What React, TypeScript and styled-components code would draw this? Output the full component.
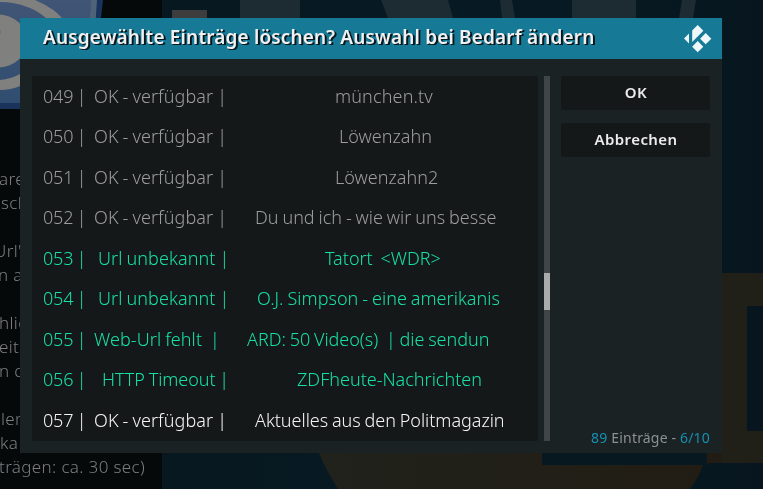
import React from "react";
import styled, { createGlobalStyle } from "styled-components";

const GlobalStyle = createGlobalStyle`
  * { box-sizing: border-box; }
  body { margin: 0; background: #07171f; overflow: hidden; }
`;

const Screen = styled.main`
  position: relative;
  width: 763px;
  height: 489px;
  padding: 18px 0 0 20px;
  overflow: hidden;
  font-family: "Noto Sans", sans-serif;
  will-change: transform;
`;

const Backdrop = styled.svg`
  position: absolute;
  inset: 0;
`;

const Description = styled.div`
  position: absolute;
  top: 167px;
  left: 0;
  width: 162px;
  color: #7c7e7f;
  font-size: 17px;
  font-weight: 300;
  line-height: 24px;
`;

const DescriptionLine = styled.div<{ $shift: number }>`
  height: 24px;
  margin-left: ${(p) => p.$shift}px;
  letter-spacing: 0.36px;
  white-space: pre;
`;

const Dialog = styled.section`
  position: relative;
  display: flex;
  flex-direction: column;
  width: 702px;
  height: 435px;
  background: #1b2224;
`;

const Header = styled.header`
  display: flex;
  align-items: center;
  justify-content: space-between;
  height: 41px;
  padding: 0 10px 0 23px;
  background: #167a96;
`;

const Title = styled.h1`
  margin: 0;
  padding-bottom: 4px;
  color: #f0f0f0;
  font-size: 19px;
  font-weight: 600;
  line-height: 24px;
  letter-spacing: 0.15px;
  white-space: nowrap;
  text-shadow: 1px 1px 0 #061820, 2px 1px 0 #061820;
`;

const Body = styled.div`
  display: flex;
  flex: 1;
  padding: 17px 12px 12px 12px;
`;

const List = styled.ul`
  width: 506px;
  height: 365px;
  margin: 0;
  padding: 0;
  background: #141819;
  border-radius: 2px;
  list-style: none;
`;

type Tone = "muted" | "warning" | "selected";

const tones: Record<Tone, string> = {
  muted: "#9c9d9d",
  warning: "#17e0a4",
  selected: "#f6f6f6",
};

const Row = styled.li<{ $tone: Tone }>`
  display: grid;
  grid-template-columns: 51px 153px 1fr;
  align-items: center;
  height: 40.55px;
  padding: 0 0 1.4px 11px;
  color: ${(p) => tones[p.$tone]};
  font-size: 18px;
  font-weight: 300;
  line-height: 24px;
  word-spacing: -0.8px;
  white-space: pre;
`;

const Cell = styled.span<{ $indent?: number; $spacing?: number }>`
  padding-left: ${(p) => p.$indent ?? 0}px;
  letter-spacing: ${(p) => p.$spacing ?? 0}px;
`;

const NumberCell = styled(Cell)`
  letter-spacing: -0.2px;
  word-spacing: -1px;
`;

const ScrollTrack = styled.div`
  width: 6px;
  height: 365px;
  margin-left: 6px;
  padding-top: 197px;
  background: #404547;
`;

const ScrollThumb = styled.div`
  height: 37px;
  background: #aaabab;
`;

const Actions = styled.aside`
  display: flex;
  flex: 1;
  flex-direction: column;
  gap: 13px;
  margin-left: 11px;
`;

const ActionButton = styled.button`
  height: 34px;
  padding: 0 0 3px 1px;
  border: 0;
  border-radius: 2px;
  background: #141819;
  color: #ececec;
  font: 600 15px/20px "Noto Sans", sans-serif;
  letter-spacing: 0.4px;
`;

const Status = styled.div`
  margin-top: auto;
  margin-bottom: -7px;
  color: #8d9091;
  font-size: 14px;
  line-height: 20px;
  text-align: right;
  white-space: nowrap;
  letter-spacing: 0.18px;
`;

const Accent = styled.span`
  color: #1690b2;
`;

interface Entry {
  id: string;
  status: string;
  title: string;
  tone: Tone;
  statusIndent?: number;
  statusSpacing?: number;
  titleIndent: number;
  titleSpacing?: number;
}

const entries: Entry[] = [
  { id: "049", status: "OK - verfügbar |", title: "münchen.tv", tone: "muted", titleIndent: 88, titleSpacing: 0.15 },
  { id: "050", status: "OK - verfügbar |", title: "Löwenzahn", tone: "muted", titleIndent: 92 },
  { id: "051", status: "OK - verfügbar |", title: "Löwenzahn2", tone: "muted", titleIndent: 88 },
  { id: "052", status: "OK - verfügbar |", title: "Du und ich - wie wir uns besse", tone: "muted", titleIndent: 8 },
  { id: "053", status: "Url unbekannt |", title: "Tatort  <WDR>", tone: "warning", statusIndent: 4, titleIndent: 78 },
  { id: "054", status: "Url unbekannt |", title: "O.J. Simpson - eine amerikanis", tone: "warning", statusIndent: 4, titleIndent: 10, titleSpacing: 0.03 },
  { id: "055", status: "Web-Url fehlt  |", title: "ARD: 50 Video(s)  | die sendun", tone: "warning", titleIndent: 0, titleSpacing: -0.03 },
  { id: "056", status: "HTTP Timeout |", title: "ZDFheute-Nachrichten", tone: "warning", statusIndent: 8, statusSpacing: -0.06, titleIndent: 50 },
  { id: "057", status: "OK - verfügbar |", title: "Aktuelles aus den Politmagazin", tone: "selected", titleIndent: 8, titleSpacing: -0.03 },
];

const description: { text: string; shift: number }[] = [
  { text: "are", shift: -1 },
  { text: "sch", shift: 1 },
  { text: "", shift: 0 },
  { text: "Url's", shift: -6 },
  { text: "n a", shift: -2 },
  { text: "", shift: 0 },
  { text: "hlie", shift: -1 },
  { text: "eit", shift: -1 },
  { text: "n d", shift: -1 },
  { text: "", shift: 0 },
  { text: "ler", shift: 1 },
  { text: "ka", shift: 0 },
  { text: "trägen: ca. 30 sec)", shift: -1 },
];

function Artwork() {
  return (
    <Backdrop width="763" height="489" viewBox="0 0 763 489">
      <defs>
        <linearGradient id="sea" x1="0" x2="1">
          <stop offset="0" stopColor="#07171f" />
          <stop offset=".72" stopColor="#071a23" />
          <stop offset="1" stopColor="#07161e" />
        </linearGradient>
        <linearGradient id="gold" x1="0" x2="1">
          <stop offset="0" stopColor="#20221b" />
          <stop offset="1" stopColor="#221c13" />
        </linearGradient>
        <linearGradient id="sky" x1="0" y1="0" x2="0" y2="1">
          <stop offset="0" stopColor="#415576" />
          <stop offset="1" stopColor="#304d70" />
        </linearGradient>
      </defs>
      <rect width="763" height="489" fill="url(#sea)" />
      <rect width="162" height="489" fill="#05090a" />
      <path d="M0 0H103L101 18L97 70V109H0Z" fill="#19335c" />
      <path d="M0 0H91L87 103H0Z" fill="url(#sky)" />
      <path d="M91 0H97L95 30H89Z" fill="#4e6278" />
      <path d="M0 0H35C46 5 55 10 62 18H46C36 9 20 2 0 2Z" fill="#80807e" />
      <path d="M0 80Q11 79 20 74V86Q11 90 0 90Z" fill="#80807e" />
      <ellipse cx="-2" cy="41" rx="29" ry="26.5" fill="#80807e" />
      <path d="M0 30h1v4h-1" fill="#70708b" />
      <path d="M240 0H300V18H240ZM381 0H448L453 18H388ZM500 0H512L515 18H502ZM572 0H636V18H572ZM682 0H696L693 18H679Z" fill="#1d2b32" />
      <rect x="172" y="10" width="35" height="8" fill="#3d3d3d" />
      <path d="M319 453H763V463H708V465H703Q699 477 690 489H338Q326 470 319 453Z" fill="url(#gold)" />
      <rect x="542" y="453" width="165" height="12" fill="#081820" />
      <path d="M722 273H763V306H747V431H763V463H722Z" fill="#201f18" />
    </Backdrop>
  );
}

function KodiMark() {
  return (
    <svg width="29" height="29" viewBox="0 0 29 29" fill="#eff7f9">
      <path d="M14.7 1 20.4 6.7 9.2 17.9V6.5Z" />
      <path d="M22.7 9.1 28.3 14.7 22.7 20.3 17.1 14.7Z" />
      <path d="M14.7 17.1 20.3 22.7 14.7 28.3 9.1 22.7Z" />
      <path d="M6 9.5V19.5L1 14.5Z" />
    </svg>
  );
}

export default function App() {
  return (
    <Screen>
      <GlobalStyle />
      <Artwork />
      <Description>
        {description.map((line, i) => (
          <DescriptionLine key={i} $shift={line.shift}>{line.text}</DescriptionLine>
        ))}
      </Description>
      <Dialog role="dialog">
        <Header>
          <Title>Ausgewählte Einträge löschen? Auswahl bei Bedarf ändern</Title>
          <KodiMark />
        </Header>
        <Body>
          <List>
            {entries.map((e) => (
              <Row key={e.id} $tone={e.tone}>
                <NumberCell>{e.id} |</NumberCell>
                <Cell $indent={e.statusIndent} $spacing={e.statusSpacing ?? 0.08}>{e.status}</Cell>
                <Cell $indent={e.titleIndent} $spacing={e.titleSpacing}>{e.title}</Cell>
              </Row>
            ))}
          </List>
          <ScrollTrack><ScrollThumb /></ScrollTrack>
          <Actions>
            <ActionButton>OK</ActionButton>
            <ActionButton>Abbrechen</ActionButton>
            <Status><Accent>89</Accent> Einträge - <Accent>6/10</Accent></Status>
          </Actions>
        </Body>
      </Dialog>
    </Screen>
  );
}
